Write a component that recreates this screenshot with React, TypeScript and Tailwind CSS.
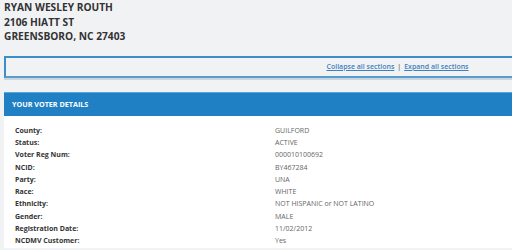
const details: [string, string][] = [
  ["County:", "GUILFORD"],
  ["Status:", "ACTIVE"],
  ["Voter Reg Num:", "000010100692"],
  ["NCID:", "BY467284"],
  ["Party:", "UNA"],
  ["Race:", "WHITE"],
  ["Ethnicity:", "NOT HISPANIC or NOT LATINO"],
  ["Gender:", "MALE"],
  ["Registration Date:", "11/02/2012"],
  ["NCDMV Customer:", "Yes"],
];

export default function App() {
  return (
    <div
      className="w-[512px] h-[250px] overflow-hidden bg-[#f1f2f4] pl-1"
      style={{ fontFamily: '"Open Sans", "Liberation Sans", sans-serif' }}
    >
      <div className="text-[10.2px] leading-[14.5px] font-bold text-[#333]">
        <p>RYAN WESLEY ROUTH</p>
        <p>2106 HIATT ST</p>
        <p>GREENSBORO, NC 27403</p>
      </div>

      <div className="mt-[12.5px] w-[787px] h-[22px] border-2 border-[#3b8ec9] border-b-[#5a9ccc] shadow-[0_2px_0_#c9d6e2] flex items-center justify-center text-[7px] font-semibold text-[#3f7fc0]">
        <a className="underline">Collapse all sections</a>
        <span className="mx-[3px] text-[#666]">|</span>
        <a className="underline">Expand all sections</a>
      </div>

      <div className="mt-[14px] w-[600px] bg-white">
        <div className="h-[24px] bg-[#1f80c4] border-t border-[#5aa5da] flex items-center pl-2 text-[7.2px] font-bold text-white">
          YOUR VOTER DETAILS
        </div>
        <div className="pt-[9px] pl-[11px]">
          {details.map(([label, value]) => (
            <div key={label} className="flex h-[12.25px] items-center">
              <span className="w-[260px] text-[7px] font-bold text-[#333]">{label}</span>
              <span className="text-[7px] text-[#666]">{value}</span>
            </div>
          ))}
        </div>
      </div>
    </div>
  );
}
